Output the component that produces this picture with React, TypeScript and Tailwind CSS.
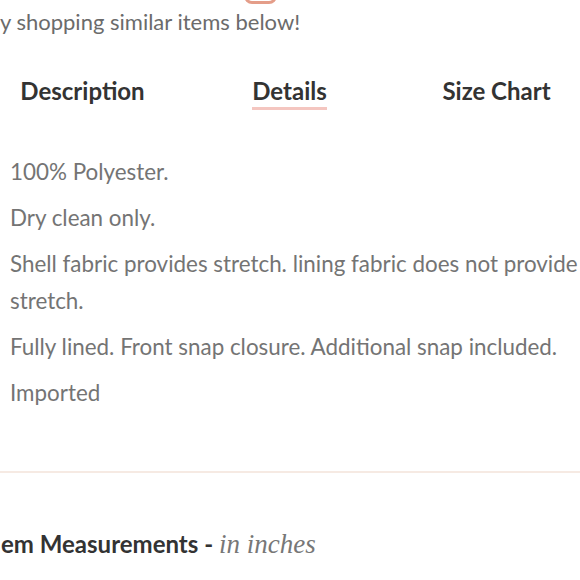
export default function App() {
  const details = [
    '100% Polyester.',
    'Dry clean only.',
    null,
    'Fully lined. Front snap closure. Additional snap included.',
    'Imported',
  ];

  return (
    <div className="w-[580px] h-[580px] overflow-hidden bg-white font-['Lato',sans-serif]">
      <div className="-ml-[21px] w-[621px]">
        {/* tail of the heading above + subtitle */}
        <div className="flex pl-[265px]">
          <div className="-mt-[12px] h-[16px] w-[33px] rounded-full border-[3px] border-[#e49d89]" />
        </div>
        <p className="mt-[4px] pl-[21px] text-[22px] leading-[28px] text-[#6b6b6b] whitespace-nowrap">
          y shopping similar items below!
        </p>

        {/* tabs */}
        <div className="mt-[41px] grid grid-cols-3 text-center">
          <div className="flex justify-center">
            <span className="text-[24px] leading-[28px] font-bold text-[#333]">Description</span>
          </div>
          <div className="flex justify-center">
            <span className="border-b-[3px] border-[#f4c6c0] pb-[2px] text-[24px] leading-[28px] font-bold text-[#333]">
              Details
            </span>
          </div>
          <div className="flex justify-center">
            <span className="text-[24px] leading-[28px] font-bold text-[#333]">Size Chart</span>
          </div>
        </div>

        {/* details list */}
        <ul className="mt-[43px] pl-[31px] flex flex-col gap-[9px] text-[22.4px] leading-[37px] text-[#747474]">
          {details.map((d, i) =>
            d ? (
              <li key={i} className="whitespace-nowrap">{d}</li>
            ) : (
              <li key={i}>
                <span className="whitespace-nowrap">Shell fabric provides stretch. lining fabric does not provide</span>
                <br />
                stretch.
              </li>
            )
          )}
        </ul>

        <div className="mt-[60px] h-[2px] bg-[#f6eae3]" />

        <h3 className="mt-[56px] pl-[22px] text-[24px] leading-[30px] font-bold text-[#333] whitespace-nowrap">
          em Measurements -{' '}
          <span className="font-['Liberation_Serif',serif] text-[27px] font-normal italic text-[#777]">in inches</span>
        </h3>
      </div>
    </div>
  );
}
